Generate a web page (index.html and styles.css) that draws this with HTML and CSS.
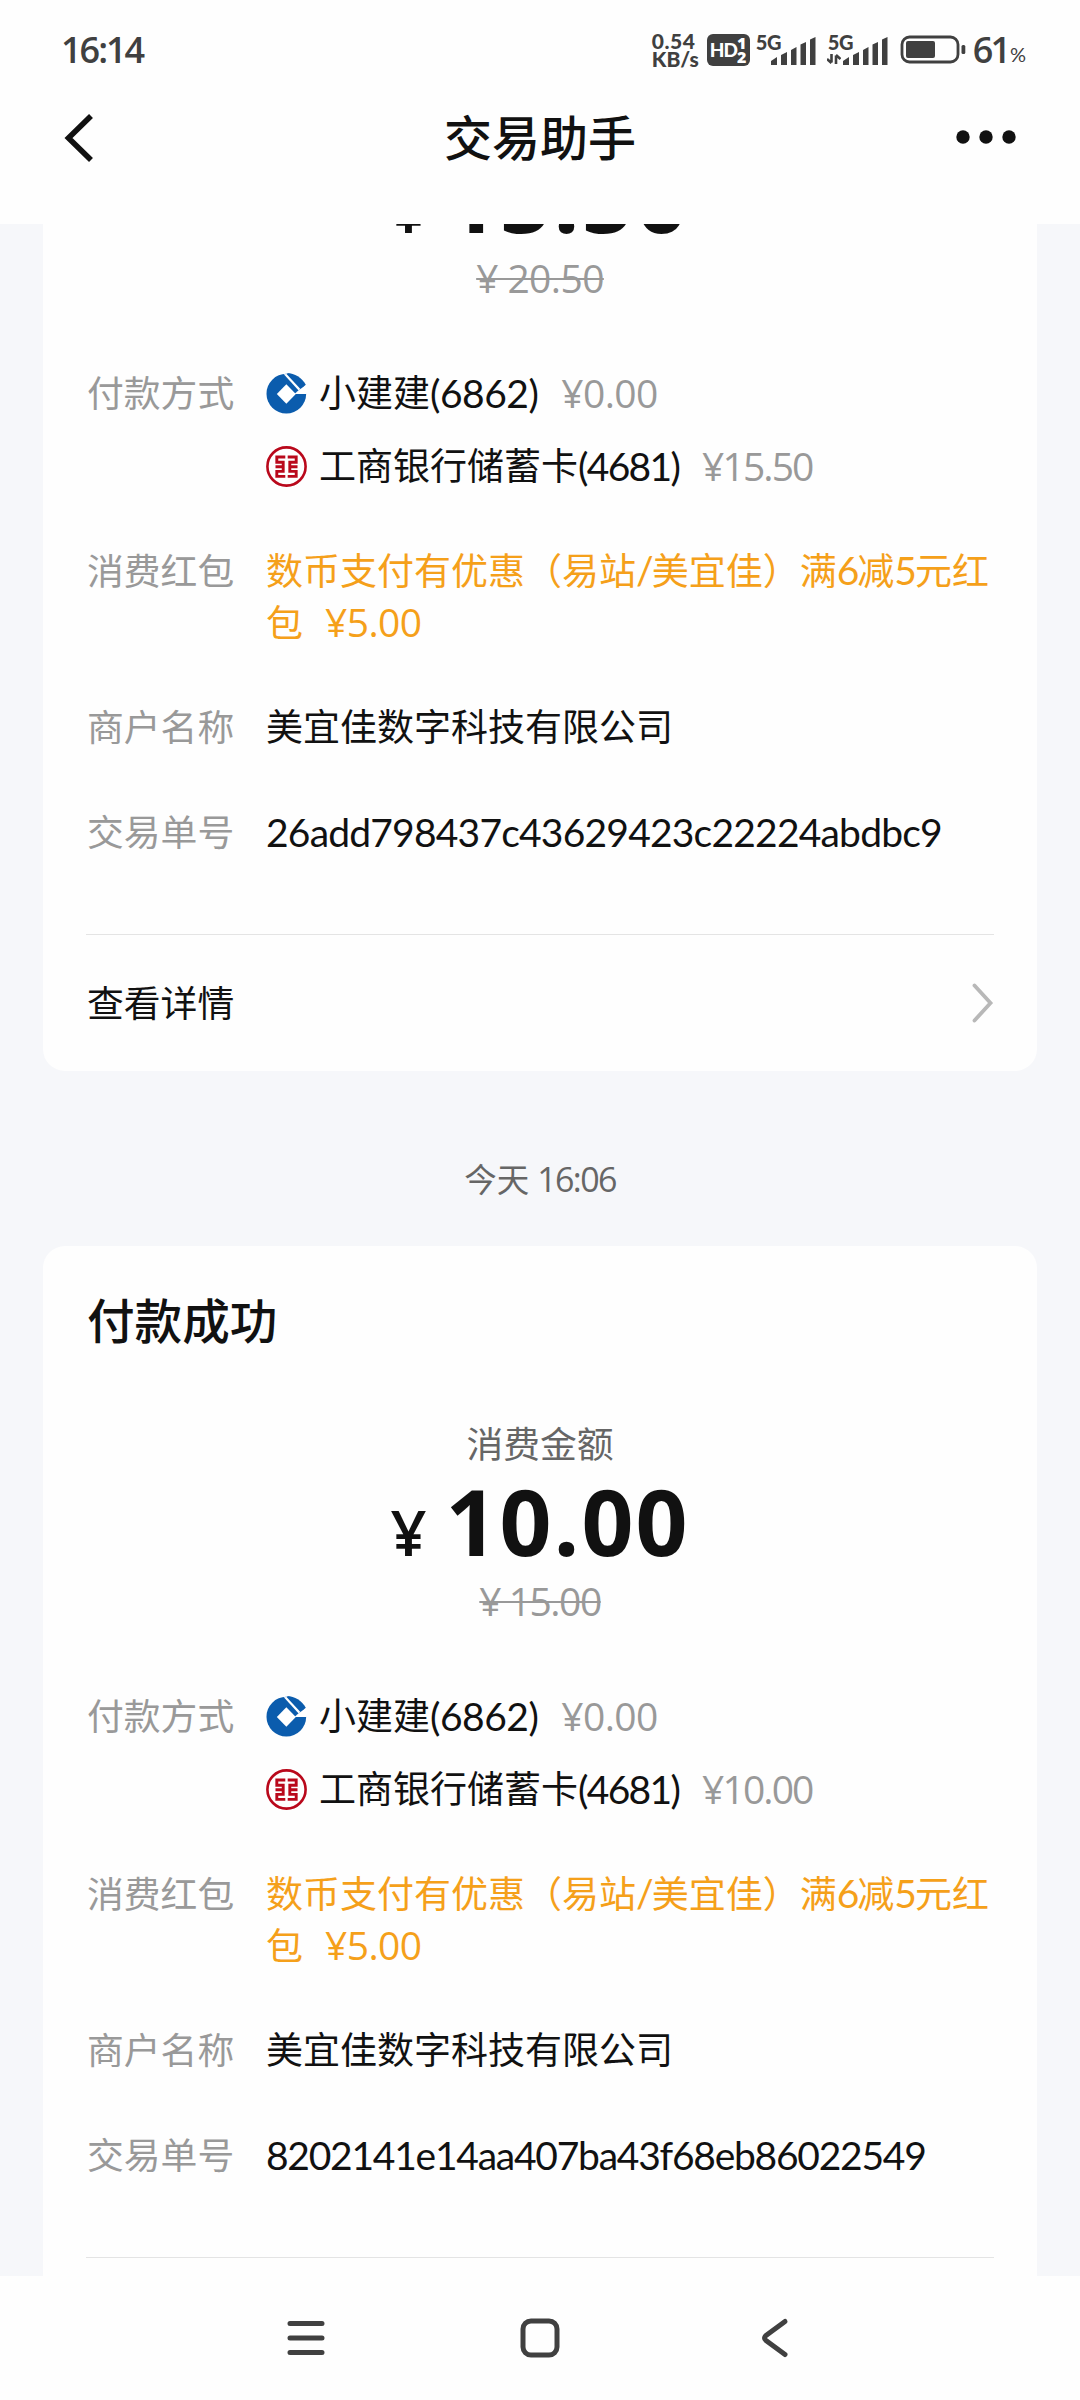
FILE: index.html
```html
<!DOCTYPE html>
<html lang="zh-CN">
<head>
<meta charset="utf-8">
<title>交易助手</title>
<link rel="stylesheet" href="styles.css">
</head>
<body>
<svg class="defs" width="0" height="0">
  <symbol id="ccb" viewBox="0 0 120 123">
    <circle cx="59.5" cy="62" r="59.5" fill="#0b5cad"/>
    <path d="M59.5 34L88 63L59.5 92L31 63Z" fill="#fff"/>
    <path d="M84 63H121V33L93 55Z" fill="#fff"/>
    <path d="M52 4L60 3L101 47L97 53Z" fill="#fff"/>
    <path d="M61 0C85 1 106 14 118 35L104 46Z" fill="#0b5cad"/>
  </symbol>
  <symbol id="icbc" viewBox="0 0 41 41">
    <g fill="none" stroke="#b9081b">
      <circle cx="20.5" cy="20.5" r="19.1" stroke-width="2.6"/>
      <path stroke-width="2.9" d="M19.3 11H10.8V16.2H17.2V25.4H10.8V30.4H19.3M17.2 20.7H9.5M21.7 11H30.2V16.2H23.8V25.4H30.2V30.4H21.7M23.8 20.7H31.5"/>
    </g>
  </symbol>
  <symbol id="bars" viewBox="0 0 45 28">
    <path fill="#404040" d="M0 28V24L6 20V28ZM10 28V18L16 15V28ZM20 28V13L25.500 10V28ZM29.500 28V7.500L35 5V28ZM39 28V2.500L44.500 0V28Z"/>
  </symbol>
</svg>

<header class="top">
  <div class="status">
    <span class="clock">16:14</span>
    <div class="indicators">
      <div class="speed"><span class="rate">0.54</span><span class="unit">KB/s</span></div>
      <div class="hd"><b>HD</b><span class="sims"><i>1</i><i>2</i></span></div>
      <div class="signal"><span class="net">5G</span><svg class="bars"><use href="#bars"/></svg></div>
      <div class="signal data"><span class="net">5G</span>
        <svg class="updown" viewBox="0 0 14 10"><path d="M4.500 0V8.500M0 5L4.500 9M9 10V1.500M13.500 5L9 1" fill="none" stroke="#404040" stroke-width="2.600"/></svg>
        <svg class="bars"><use href="#bars"/></svg></div>
      <svg class="battery" viewBox="0 0 66 30">
        <rect x="2" y="2" width="56" height="25" rx="7.500" fill="none" stroke="#404040" stroke-width="2.800"/>
        <rect x="6" y="6" width="29" height="17" rx="2" fill="#404040"/>
        <rect x="61.500" y="10" width="3.800" height="9" rx="1.500" fill="#404040"/>
      </svg>
      <span class="level">61</span><span class="percent">%</span>
    </div>
  </div>
  <nav class="titlebar">
    <svg class="back" viewBox="0 0 30 50"><path d="M27 3L4.500 25L27 47" fill="none" stroke="#111" stroke-width="5.600"/></svg>
    <h1>交易助手</h1>
    <svg class="more" viewBox="0 0 60 14"><g fill="#111"><circle cx="7" cy="7" r="6.700"/><circle cx="30" cy="7" r="6.700"/><circle cx="53" cy="7" r="6.700"/></g></svg>
  </nav>
</header>

<main class="feed">
  <section class="card scrolled">
    <p class="amount"><span class="yen">¥</span><span class="sum">15.50</span></p>
    <p class="original"><s class="w20">¥ 20.50</s></p>
    <dl class="rows">
      <dt>付款方式</dt>
      <dd class="methods">
        <div class="method"><svg><use href="#ccb"/></svg>小建建<span class="n n6862">(6862)</span><span class="n paid zero">¥0.00</span></div>
        <div class="method"><svg><use href="#icbc"/></svg>工商银行储蓄卡<span class="n n4681">(4681)</span><span class="n paid tight">¥15.50</span></div>
      </dd>
      <dt>消费红包</dt>
      <dd class="bonus">数币支付有优惠（易站<span class="n digit">/</span>美宜佳）满<span class="n digit">6</span>减<span class="n digit">5</span>元红<br>包<span class="n off">¥5.00</span></dd>
      <dt>商户名称</dt>
      <dd>美宜佳数字科技有限公司</dd>
      <dt>交易单号</dt>
      <dd><span class="n id-a">26add798437c43629423c22224abdbc9</span></dd>
    </dl>
    <div class="detail"><span>查看详情</span><svg viewBox="0 0 22 40"><path d="M2.500 2.500L18.500 20L2.500 37.500" fill="none" stroke="#b8b8b8" stroke-width="3.800" stroke-linecap="round"/></svg></div>
  </section>

  <p class="time">今天<span>16:06</span></p>

  <section class="card">
    <h2>付款成功</h2>
    <p class="caption">消费金额</p>
    <p class="amount"><span class="yen">¥</span><span class="sum">10.00</span></p>
    <p class="original"><s class="w15">¥ 15.00</s></p>
    <dl class="rows">
      <dt>付款方式</dt>
      <dd class="methods">
        <div class="method"><svg><use href="#ccb"/></svg>小建建<span class="n n6862">(6862)</span><span class="n paid zero">¥0.00</span></div>
        <div class="method"><svg><use href="#icbc"/></svg>工商银行储蓄卡<span class="n n4681">(4681)</span><span class="n paid tight">¥10.00</span></div>
      </dd>
      <dt>消费红包</dt>
      <dd class="bonus">数币支付有优惠（易站<span class="n digit">/</span>美宜佳）满<span class="n digit">6</span>减<span class="n digit">5</span>元红<br>包<span class="n off">¥5.00</span></dd>
      <dt>商户名称</dt>
      <dd>美宜佳数字科技有限公司</dd>
      <dt>交易单号</dt>
      <dd><span class="n id-b">8202141e14aa407ba43f68eb86022549</span></dd>
    </dl>
    <div class="detail"></div>
  </section>
</main>

<footer class="keys">
  <svg viewBox="0 0 40 40"><path d="M4 5.500H36M4 20H36M4 34.500H36"/></svg>
  <svg viewBox="0 0 40 40"><rect x="3" y="3" width="34" height="34" rx="8"/></svg>
  <svg viewBox="0 0 40 40"><path d="M31 3.500L12 17.500Q9 20 12 22.500L31 36.500"/></svg>
</footer>
</body>
</html>
```
FILE: styles.css
```css
* { box-sizing: border-box; margin: 0; padding: 0; }
body {
  width: 1080px;
  height: 2400px;
  overflow: hidden;
  display: flex;
  flex-direction: column;
  background: #fefefe;
  color: #111;
  font: 36.8px/52px Lato, "Noto Sans CJK SC", sans-serif;
}
.defs { position: absolute; }
svg { flex: none; display: block; }

/* status bar and title */
.top { height: 224px; flex: none; }
.status {
  height: 100px;
  padding: 0 54px 0 61px;
  display: flex;
  justify-content: space-between;
  align-items: center;
  color: #404040;
  line-height: 36px;
}
.clock, .level { font-family: "Open Sans", sans-serif; font-size: 36px; font-weight: 600; }
.clock { letter-spacing: -2px; }
.indicators { display: flex; align-items: center; }
.speed { width: 55px; font-size: 21px; font-weight: 900; line-height: 18.500px; display: flex; flex-direction: column; }
.rate { letter-spacing: .5px; }
.hd {
  width: 43px;
  height: 32px;
  margin-right: 6px;
  padding-left: 3px;
  border-radius: 6px;
  background: #404040;
  color: #fff;
  display: flex;
  align-items: center;
}
.hd b { font-size: 19px; font-weight: 900; letter-spacing: -1px; }
.sims { display: flex; flex-direction: column; font: 800 16px/14px "Open Sans", sans-serif; }
.sims i { font-style: normal; }
.signal { width: 60px; height: 32px; margin-right: 12px; position: relative; }
.net { position: absolute; left: 0; top: -1px; font-size: 20px; font-weight: 900; line-height: 18px; letter-spacing: -.5px; }
.bars { position: absolute; right: 0; bottom: 1px; width: 45px; height: 28px; }
.updown { position: absolute; left: -1px; bottom: 2px; width: 14px; height: 10px; }
.battery { width: 66px; height: 30px; margin-right: 7px; }
.level { letter-spacing: -3px; }
.percent { font-size: 20px; padding-top: 8px; margin-left: 2px; }
.titlebar {
  height: 76px;
  padding: 0 64px;
  display: flex;
  align-items: center;
  justify-content: space-between;
}
.back { width: 30px; height: 50px; margin-right: 30px; }
.more { width: 60px; height: 14px; margin-bottom: 3px; }
h1, h2 { font-size: 48px; font-weight: 500; line-height: 62px; }

/* message feed */
.feed { height: 2052px; flex: none; overflow: hidden; padding: 0 43px; background: #f6f7fa; }
.card { height: 1148px; border-radius: 22px; padding: 44px 43px 0; background: #fefefe; }
/* the upper card is scrolled so that only the foot of its amount shows */
.scrolled { height: 924px; margin-top: -77px; padding-top: 0; border-radius: 0 0 22px 22px; }
h2 { padding-left: 1px; font-size: 47.600px; }
.caption { margin-top: 66px; text-align: center; color: #666; }
.amount {
  height: 105px;
  display: flex;
  justify-content: center;
  align-items: baseline;
  font-family: "Open Sans", sans-serif;
  font-weight: 700;
  line-height: 102px;
}
.yen { font-size: 63px; font-weight: 600; margin-right: 19px; }
.sum { font-size: 91px; letter-spacing: 2px; }
.original { height: 52px; display: flex; justify-content: center; color: #999; font-size: 39px; font-family: "Open Sans", sans-serif; }
.original s { text-decoration-thickness: 2px; }
.w20 { letter-spacing: -.6px; }
.w15 { letter-spacing: -1.500px; }
.rows {
  margin-top: 63px;
  padding-left: 1px;
  display: grid;
  grid-template-columns: 179px 1fr;
  row-gap: 53px;
}
dt { color: #999; }
dd { white-space: nowrap; font-size: 37px; }
.methods { display: flex; flex-direction: column; gap: 21px; }
.method { display: flex; }
.method svg { width: 41px; height: 41px; margin: 6px 12px 0 0; }
.n { font-size: 39px; }
.n6862 { letter-spacing: -.5px; }
.n4681 { letter-spacing: -1.700px; }
.paid { color: #999; margin-left: 23px; }
.paid, .off { font-family: "Open Sans", sans-serif; }
.zero, .off { letter-spacing: -.6px; }
.tight { letter-spacing: -1.900px; }
.bonus { color: #f5a01a; line-height: 51px; }
.digit { letter-spacing: -2px; }
.off { margin-left: 22px; }
.id-a { letter-spacing: -.8px; }
.id-b { letter-spacing: -1.250px; }
.detail {
  margin-top: 75px;
  height: 137px;
  padding-left: 1px;
  border-top: 1px solid #e4e4e4;
  display: flex;
  align-items: center;
  justify-content: space-between;
}
.detail svg { width: 22px; height: 40px; }
.time { margin: 82px 0 40px; text-align: center; color: #666; font-size: 32.500px; }
.time span { margin-left: 8px; font-family: "Open Sans", sans-serif; font-size: 34px; letter-spacing: -1.600px; }

/* system navigation keys */
.keys { flex: 1; padding: 42px 286px 0 286px; display: flex; justify-content: space-between; }
.keys svg { width: 40px; height: 40px; fill: none; stroke: #404040; stroke-width: 5; stroke-linecap: round; }
```
